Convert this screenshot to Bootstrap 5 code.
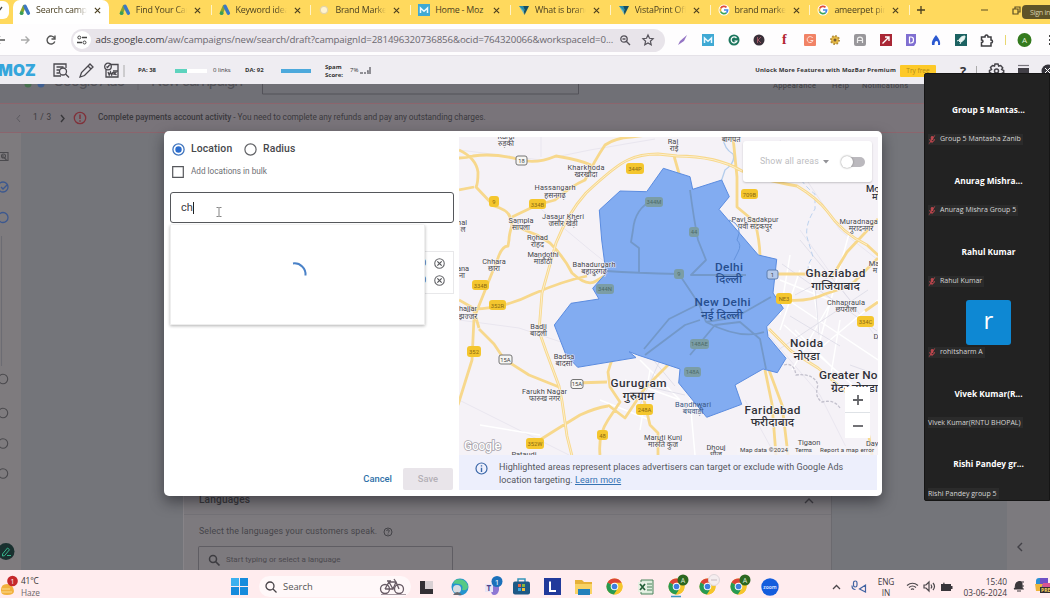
<!DOCTYPE html>
<html lang="en">
<head>
<meta charset="utf-8">
<meta name="viewport" content="width=device-width, initial-scale=1">
<title>Search campaign - Google Ads</title>
<link href="https://cdn.jsdelivr.net/npm/bootstrap@5.3.0/dist/css/bootstrap.min.css" rel="stylesheet">
<style>
html,body{height:598px;overflow:hidden}
body{font-family:"Open Sans","Noto Sans",sans-serif;font-size:9.5px;line-height:1.2;color:#333;white-space:nowrap}
svg{display:block;flex:none;overflow:visible}
.shell{width:1050px;height:598px}
/* browser chrome */
.tabstrip{height:24px;background:#ffd95d;padding-left:13px}
.tabitem{width:99.8px;height:20px;padding-left:6px;position:relative;flex:none}
.tabitem+.tabitem::before{content:"";position:absolute;left:-2px;top:5px;width:1px;height:10px;background:#fff3c8}
.tabitem.on::before,.tabitem.on+.tabitem::before{display:none!important}
.tabitem .ttl{width:51px;overflow:hidden;margin-left:5px;margin-right:-1px;font-size:8.900px;color:#4a4022;letter-spacing:-.2px;-webkit-mask-image:linear-gradient(90deg,#000 78%,transparent)}
.tabitem.on{width:96px;margin-right:3.8px;height:24px;background:#fff;border-radius:7px 7px 0 0;padding-bottom:4px}
.toolbar{height:32px;background:#fefdfe;border-bottom:1px solid #e5e2e8;padding-top:1px}
.omni{width:594px;height:23px;border-radius:12px;background:#e8e4ea;margin-left:8.500px;padding-left:2px}
.omni .knob{width:18px;height:18px;background:#fff}
.url{font-size:9.700px;letter-spacing:-.12px;margin-left:5px;width:518px;color:#6b686f}
.url b{font-weight:400;color:#3f3d42}
.exts{width:329px}
.exts>*{width:25.3px}
.exts svg{margin:auto}
.moz{height:28px;background:#efedf2;font-size:6px;font-weight:700;font-family:"Open Sans",sans-serif;padding-top:2px}
.mozlogo{font:900 15.500px/1 "Inter",sans-serif;color:#35a6dc;letter-spacing:.1px;width:39px;margin-left:-2px}
.meter{height:3.500px;width:32px;background:#fff}
.tryfree{background:#fdc928;color:#b08a1a;width:36px;height:12px;font-weight:400;font-size:6.5px;border-radius:1px}
/* dimmed page */
.page{height:486px;background:#74757a;font-family:Roboto,sans-serif;color:#46454a}
.ghead{height:19px;background:#707076;overflow:hidden}
.notice{height:30px;background:#79747a;border-top:1px solid #8b656d;border-bottom:1px solid #8b656d;font-size:8.3px;letter-spacing:-.05px;color:#3a393d}
.rail{width:21px;background:#7e7b7e;padding-top:17px}
.rail svg{position:relative;left:-5px}
.sheet{width:649px;background:#7d7a7e;margin-left:162px;border-left:1px solid #878488;border-right:1px solid #6b6a6f}
.langin{width:255px;height:24px;border:1px solid #5f5d63;border-bottom:0;border-radius:2px 2px 0 0;font-size:8px;color:#4b494e}
.endrail{width:43px;background:#7c7a7e}
/* dialog */
.dlg{position:absolute;left:164px;top:131px;width:718px;height:365px;background:#fff;border-radius:5px;box-shadow:0 6px 14px rgba(20,20,25,.5);font-family:Roboto,sans-serif;color:#3c4043}
.pane{width:295px;padding:12px 5px 6px 6px;position:relative}
.opt{font-size:10.400px;letter-spacing:.12px;color:#47484c;font-weight:500}
.locin{height:31px;border:1px solid #55575b;border-radius:3px;font-size:11px;margin-top:14px;padding-left:10px}
.suggest{position:absolute;left:6px;top:94px;width:255px;height:100px;background:#fff;border:1px solid #eee;border-top:0;box-shadow:0 1px 3px rgba(0,0,0,.3)}
.picked{height:43px;border:1px solid #e8e8ea;margin-top:28px;padding:5px 7px 6px 0}
.savebtn{width:50px;height:22px;background:#e9e5ea;color:#b4b0b6;border-radius:2px}
.dact{font-size:9.4px;font-weight:500;padding-right:1px}
.hint{height:35px;width:418px;background:#edeffc;font-size:9px;line-height:13px;color:#54565c;padding:6px 0 0 16px}
.mapbox{position:relative;width:419px;height:318px;background:#f5f2f7;overflow:hidden}
.areas{position:absolute;left:284px;top:4px;width:129px;height:41px;background:#fff;border-radius:3px;box-shadow:0 1px 2px rgba(0,0,0,.2);font-size:8.800px;color:#bdbdc1;letter-spacing:.15px;padding:0 7px 0 17px}
.areas span svg{vertical-align:middle}
.toggle{width:23px;height:10px;border-radius:6px;background:#bbb9be;position:relative}
.toggle::before{content:"";position:absolute;left:-1px;top:-1px;width:12px;height:12px;border-radius:50%;background:#fff;box-shadow:0 0 2px #777}
.zoomer{position:absolute;left:386px;top:250px;width:25px;height:51px;background:#fff}
.zoomer svg{margin:auto}
/* call participants */
.call{position:absolute;left:924px;top:73px;width:126px;height:428px;background:#222;border-radius:2px 0 0 2px;border:1px solid #151515;color:#fff;font-family:"Open Sans",sans-serif}
.tile{height:70.900px;position:relative}
.tile .big{font-weight:700;font-size:8.3px;text-align:center;padding:31px 0 0 3px}
.tile .tag{position:absolute;left:3px;bottom:0;height:11px;background:#2b2b2b;font-size:7px;color:#d6d6d6;padding-right:2px}
.ava{width:45px;height:45px;background:#0e88d3;border-radius:3px;font-size:24px;line-height:40px;text-align:center;position:absolute;left:41px;top:13px}
.signin{position:absolute;left:1022px;top:5px;width:40px;height:14px;border-radius:4px;background:#5f5328;color:#d5cdae;font-size:7.200px;line-height:14px;padding-left:8px;letter-spacing:-.3px}
/* taskbar */
.task{height:28px;background:#ffecee;padding-top:5px}
.find{width:152px;height:21px;border-radius:11px;background:#fff8f9;font-size:9.4px;color:#555}
.apps>*{width:31px;height:23px;display:flex;align-items:center;justify-content:center}
.clock{font-size:8.300px;line-height:11px;letter-spacing:-.1px;color:#3e3a3e}
</style>
</head>
<body>
<svg width="0" height="0" style="position:absolute">
<defs>
<symbol id="ads" viewBox="0 0 12 12"><path d="M5.200 2.500 2.600 8.500" stroke="#8aa52e" stroke-width="3.200" stroke-linecap="round"/><path d="M6 2.300 9.400 9.300" stroke="#3b78c4" stroke-width="3.400" stroke-linecap="round"/><circle cx="2.600" cy="9.200" r="1.900" fill="#3a9e55"/></symbol>
<symbol id="goog" viewBox="0 0 12 12"><circle cx="6" cy="6" r="5.500" fill="#fff"/><g fill="none" stroke-width="1.700"><path d="M8.500 3.300A3.700 3.700 0 0 0 2.700 4.400" stroke="#df4b3b"/><path d="M2.700 4.400a3.700 3.700 0 0 0 0 3.200" stroke="#efb22a"/><path d="M2.700 7.600a3.700 3.700 0 0 0 5.700 1.200" stroke="#37a457"/><path d="M8.400 8.800Q9.700 7.600 9.600 6H6" stroke="#4285e8"/></g></symbol>
<symbol id="vista" viewBox="0 0 12 12"><path d="M1 2h4l1.500 9z" fill="#65b8c7"/><path d="M5 2h6L6.500 11z" fill="#174f63"/><path d="M1 2h4l2 4-1 1z" fill="#2c8ea8"/></symbol>
<symbol id="mozm" viewBox="0 0 12 12"><path d="M0 0h12v12H0z" fill="#3fa9d4"/><path d="M2.500 9V4L6 7.200 9.500 4v5" fill="none" stroke="#e9f8ff" stroke-width="1.500"/></symbol>
<symbol id="x" viewBox="0 0 8 8"><path d="M1 1l6 6M7 1 1 7" stroke="#4a3f20" stroke-width="1.300"/></symbol>
<symbol id="chrome" viewBox="0 0 18 18"><circle cx="9" cy="9" r="8.500" fill="#f5c52c"/><path d="M9 9 1.600 4.800A8.500 8.500 0 0 1 16.500 5z" fill="#db4437"/><path d="M9 9 1.600 4.800A8.500 8.500 0 0 0 8.500 17.500l4-6z" fill="#279a53"/><path d="M9 5h7.500a8.500 8.500 0 0 1-8 12.500L12.500 11z" fill="#f5c52c"/><circle cx="9" cy="9" r="4" fill="#fff"/><circle cx="9" cy="9" r="3" fill="#3d7ee0"/></symbol>
<symbol id="mic" viewBox="0 0 8 10"><rect x="2.700" y="1" width="2.800" height="4.800" rx="1.400" fill="#b8474c"/><path d="M1.500 4.500q0 3 2.600 3t2.600-3M4 7.500V9M1 9.500 7 .5" fill="none" stroke="#c84850" stroke-width="1"/></symbol>
<symbol id="rx" viewBox="0 0 12 12"><circle cx="6" cy="6" r="4.400" fill="none" stroke="#67686c"/><path d="m4 4 4 4m0-4L4 8" stroke="#55565a" stroke-width="1.100"/></symbol>
</defs>
</svg>
<div class="shell d-flex flex-column position-relative">
  <header class="tabstrip d-flex align-items-start">
    <div class="position-absolute bg-white" style="left:-8px;top:1px;width:17px;height:18px;border-radius:6px"></div>
    <svg class="position-absolute" style="left:-4px;top:7px" width="7" height="6"><path d="m0 1 3 3 3-4" stroke="#444" fill="none" stroke-width="1.300"/></svg>
    <div class="tabitem on d-flex align-items-center"><svg width="12" height="12"><use href="#ads"/></svg><span class="ttl">Search campa</span><svg class="ms-2" width="7" height="7"><use href="#x"/></svg></div>
    <div class="tabitem d-flex align-items-center"><svg width="12" height="12"><use href="#ads"/></svg><span class="ttl">Find Your Cam</span><svg class="ms-2" width="7" height="7"><use href="#x"/></svg></div>
    <div class="tabitem d-flex align-items-center"><svg width="12" height="12"><use href="#ads"/></svg><span class="ttl">Keyword ideas</span><svg class="ms-2" width="7" height="7"><use href="#x"/></svg></div>
    <div class="tabitem d-flex align-items-center"><svg width="12" height="12"><circle cx="6" cy="6" r="3.700" fill="#fff3d0" stroke="#e3d4a8" stroke-width="1.300"/></svg><span class="ttl">Brand Market</span><svg class="ms-2" width="7" height="7"><use href="#x"/></svg></div>
    <div class="tabitem d-flex align-items-center"><svg width="12" height="12"><use href="#mozm"/></svg><span class="ttl" style="-webkit-mask-image:none">Home - Moz</span><svg class="ms-2" width="7" height="7"><use href="#x"/></svg></div>
    <div class="tabitem d-flex align-items-center"><svg width="12" height="12"><use href="#vista"/></svg><span class="ttl">What is brand</span><svg class="ms-2" width="7" height="7"><use href="#x"/></svg></div>
    <div class="tabitem d-flex align-items-center"><svg width="12" height="12"><use href="#vista"/></svg><span class="ttl">VistaPrint Offi</span><svg class="ms-2" width="7" height="7"><use href="#x"/></svg></div>
    <div class="tabitem d-flex align-items-center"><svg width="12" height="12"><use href="#goog"/></svg><span class="ttl">brand market</span><svg class="ms-2" width="7" height="7"><use href="#x"/></svg></div>
    <div class="tabitem d-flex align-items-center"><svg width="12" height="12"><use href="#goog"/></svg><span class="ttl">ameerpet pin</span><svg class="ms-2" width="7" height="7"><use href="#x"/></svg></div>
    <div class="tabitem d-flex align-items-center"><svg width="8" height="8"><path d="M4 0v8M0 4h8" stroke="#4a3f20" stroke-width="1.300"/></svg><svg style="margin-left:56px" width="8" height="8"><path d="M0 4h7" stroke="#5c4f25"/></svg><svg style="margin-left:23px" width="9" height="9"><path d="M1 3h5v5H1zM3 3V1h5v5H6" fill="none" stroke="#5c4f25" stroke-width="1.200"/></svg></div>
  </header>
  <div class="signin">Sign in</div>

  <div class="toolbar d-flex align-items-center">
    <svg width="62" height="22"><g fill="none" stroke="#555" stroke-width="1.400"><path d="M-3 11h8M0 7l-4 4 4 4"/><path stroke="#aaa" d="M21 11h8M25.500 7.500 29 11l-3.500 3.500"/><path d="M54.500 9a4 4 0 1 0 .3 3.500M55 6.500V10h-3.500"/></g></svg>
    <div class="omni d-flex align-items-center">
      <span class="knob rounded-circle d-flex align-items-center justify-content-center"><svg width="10" height="10"><path d="M5 2.500h5M0 7.500h5" stroke="#444" stroke-width="1.300"/><circle cx="2.300" cy="2.500" r="1.500" fill="none" stroke="#444"/><circle cx="7.500" cy="7.500" r="1.500" fill="none" stroke="#444"/></svg></span>
      <span class="url"><b>ads.google.com</b>/aw/campaigns/new/search/draft?campaignId=281496320736856&amp;ocid=764320066&amp;workspaceId=0...</span>
      <svg style="margin-left:6px" width="11" height="11"><circle cx="4" cy="4" r="3.200" fill="none" stroke="#55525a" stroke-width="1.300"/><path d="M2.500 4h3M6.500 6.500 10 10" stroke="#55525a" stroke-width="1.400"/></svg>
      <svg style="margin-left:11px" width="12" height="12"><path d="m6 1 1.500 3.300 3.600.4L8.400 7.200l.8 3.500L6 8.900l-3.200 1.800.8-3.500L.9 4.700l3.600-.4z" fill="none" stroke="#55525a" stroke-width="1.200"/></svg>
    </div>
    <div class="exts d-flex align-items-center" style="margin-left:6px">
      <span><svg width="12" height="12"><path d="M1 11 3 7l7-6-3 6z" fill="#9474c4"/></svg></span>
      <span><svg width="12" height="12"><use href="#mozm"/></svg></span>
      <span><svg width="12" height="12"><circle cx="6" cy="6" r="5.500" fill="#1d765e"/><path d="M8.500 4A3 3 0 1 0 9 7H6.500" fill="none" stroke="#fff" stroke-width="1.200"/></svg></span>
      <span><svg width="12" height="12"><circle cx="6" cy="6" r="5.500" fill="#3a3039"/><path d="M4.500 3v6M8 3 5 6l3 3" fill="none" stroke="#9a5563"/></svg></span>
      <span class="text-center" style="font:700 14px/12px 'Liberation Serif',serif;color:#b32632">f</span>
      <span><svg width="12" height="12"><rect width="12" height="12" rx="1" fill="#f18366"/><path d="M8.700 4A3 3 0 1 0 9 6.500H6.500" fill="none" stroke="#ffe1d8"/></svg></span>
      <span><svg width="12" height="12"><circle cx="6" cy="6" r="4" fill="#e8bb45" stroke="#b08c3c" stroke-width="2" stroke-dasharray="1.500 1.600"/><circle cx="6" cy="6" r="1.500" fill="#755a35"/></svg></span>
      <span><svg width="12" height="12"><rect width="12" height="12" rx="2" fill="#99979b"/><path d="M3.500 9V5.500q0-2.300 2.500-2.300t2.500 2.300V9M3.500 6.500h5" fill="none" stroke="#eee" stroke-width="1.200"/></svg></span>
      <span><svg width="12" height="12"><path d="M0 0h12v12H0z" fill="#a92735"/><path d="m2.500 9.500 6-6M5 3h4v4" stroke="#fff" stroke-width="1.400" fill="none"/></svg></span>
      <span><svg width="12" height="12"><path d="M1 0h10v9l-2 3H1z" fill="#806fd1"/><path d="M4.500 3v6H6q2.500 0 2.500-3T6 3z" fill="none" stroke="#fff" stroke-width="1.200"/></svg></span>
      <span><svg width="12" height="12"><path d="M2 11Q1 7 6 1q5 6 4 10z" fill="#2b59d0"/><path d="M4.500 11q0-4 2-4t1.500 4z" fill="#fff"/></svg></span>
      <span><svg width="12" height="12"><path d="M0 0h12v12H0z" fill="#1c6262"/><path d="M10 2Q5 2 4 7l1 1q5-1 5-6M4 6 2 7m4 1-1 2" fill="#e8f5f2" stroke="#e8f5f2"/></svg></span>
      <span><svg width="13" height="13"><path d="M1.500 3H5q0-2 1.500-2T8 3h3v3q1.500 0 1.500 1.500T11 9v3H1.500V8.500Q3 8.500 3 7.300T1.500 6z" fill="none" stroke="#3d3c40" stroke-width="1.500"/></svg></span>
    </div>
    <svg width="46" height="20" style="margin-left:4px"><path d="M1.500 5v10" stroke="#e8d770"/><circle cx="20.500" cy="10" r="7" fill="#347a1e"/><text x="20.500" y="13" font-size="8" text-anchor="middle" fill="#e2f1dc">A</text><path d="M46 5v2m0 2v2m0 2v2" stroke="#444" stroke-width="2"/></svg>
  </div>

  <div class="moz d-flex align-items-center">
    <span class="mozlogo">MOZ</span>
    <svg style="margin-left:16px" width="75" height="18"><g fill="none" stroke="#4a484e" stroke-width="1.300"><path d="M13 6V2H1v12h7M3.500 5h7M3.500 8h3M3.500 11h3"/><circle cx="10" cy="9.500" r="3.500"/><path d="m12.500 12 3.500 3.500M27 15l1.500-4.500 8.500-8.500 3 3-8.500 8.500zM35 4l3 3"/><path d="M60 9h5M56.500 2.500H65v12.500H53V8"/><circle cx="55" cy="4.500" r="3.300"/><path d="m53.500 4.500 1 1 2-2.500M55 10l1.200 3 1.300-3 1.200 3 1.300-3M61 10v3M63.500 10l-2 1.500 2 1.500"/></g><path d="M71 3v12" stroke="#aaa"/></svg>
    <span style="margin-left:10px;width:37px">PA: 38</span>
    <span class="meter"><i class="d-block h-100" style="width:37%;background:#5dd3be"></i></span>
    <span class="fw-normal" style="margin-left:6px;width:32px">0 links</span>
    <span style="width:36px">DA: 92</span>
    <span class="meter" style="width:30px;background:#4da9dc"></span>
    <span style="margin-left:14px;width:25px;line-height:8px">Spam<br>Score:</span>
    <span class="fw-normal">7%</span>
    <svg width="14" height="8" style="margin-left:2px"><path d="M0 6h3M4 6h2M7 4h1v3M10 0v7" stroke="#727077" stroke-width="1.500" fill="none"/></svg>
    <span class="ms-auto text-end" style="width:145px;margin-right:4px;letter-spacing:.16px">Unlock More Features with MozBar Premium</span>
    <span class="tryfree d-flex align-items-center justify-content-center">Try free</span>
    <svg width="114" height="20" ><text x="24" y="14.500" font-size="13" font-weight="700" fill="#353439">?</text><path d="M40.500 5v12" stroke="#aaa"/><g fill="none" stroke="#46444a" stroke-width="1.500"><path d="m58.500 5 .5-2h3l.7 2 2-.5 2 2.300-1 1.700 2 1v2l-2 1 1 2-2 2-2-1-.7 2h-3l-.5-2-2 1-2-2 1-2-2-1v-2l2-1-1-2 2-2z"/><circle cx="60.500" cy="10" r="2"/></g><path d="M82 4.500h11" stroke="#77757c" stroke-width="1.200"/><path d="M82 7h11v6H82z" fill="#424047"/><circle cx="112" cy="10" r="6.500" fill="#35343b"/><path d="m109 7 5 5m0-5-5 5" stroke="#fff"/></svg>
  </div>

  <main class="page d-flex flex-column">
    <div class="ghead position-relative">
      <svg width="924" height="19"><circle cx="28" cy="0" r="3.500" fill="#47704f"/><circle cx="41" cy="0" r="3.500" fill="#3f5f91"/><g font-size="16" fill="#515057"><text x="53" y="1.500" textLength="72">Google Ads</text><text x="151" y="1.500" textLength="92">New campaign</text></g><path d="M138 0v6" stroke="#66656b"/><path d="M262.500 0v10h316V0" fill="none" stroke="#535259"/><g font-size="7.500" fill="#3f3e44"><text x="773" y="4" textLength="43">Appearance</text><text x="832" y="4" textLength="17">Help</text><text x="862" y="4" textLength="46">Notifications</text></g></svg>
    </div>
    <div class="notice d-flex align-items-center">
      <svg style="margin-left:15px" width="8" height="9"><path d="M5 1 2 4.500 5 8" fill="none" stroke="#5c5a60"/></svg><span style="margin-left:10px;width:26px;letter-spacing:.3px">1 / 3</span>
      <svg width="8" height="9"><path d="m2 1 3 3.500L2 8" fill="none" stroke="#38373b" stroke-width="1.400"/></svg>
      <svg style="margin-left:6px" width="14" height="14"><circle cx="7" cy="7" r="5.700" fill="none" stroke="#80313a" stroke-width="1.300"/><path d="M7 3.500V8m0 1.300v1.500" stroke="#80313a" stroke-width="1.500"/></svg>
      <span style="margin-left:11px"><span class="fw-medium">Complete payments account activity</span> - You need to complete any refunds and pay any outstanding charges.</span>
    </div>
    <div class="d-flex flex-grow-1" style="min-height:0">
      <aside class="rail">
        <svg width="20" height="420" viewBox="-5 150 20 420"><g fill="none" stroke="#4b4a4e" stroke-width="1.100"><path d="M-4 152.500H8v8H-4zM3 155v3m1.500 0 2 2"/><circle cx="3.500" cy="156" r="2"/><g stroke="#3c588f" stroke-width="1.300"><circle cx="3" cy="187" r="5"/><path d="m1 187 2 2 4-4"/><circle cx="3" cy="217.500" r="5"/></g><path d="M1.500 236v130" stroke="#6c6c73"/><circle cx="3" cy="379" r="4.700"/><circle cx="3" cy="413" r="4.700"/><circle cx="3" cy="443.500" r="4.700"/><circle cx="3" cy="473.500" r="4.700"/></g><circle cx="6" cy="551.500" r="8.500" fill="#19302f"/><path d="m2.500 554 5-6 2 1.700-5 6-2 .3zM7 555.500h4" fill="none" stroke="#35b48c"/></svg>
      </aside>
      <section class="sheet d-flex flex-column justify-content-end">
        <div class="d-flex align-items-center justify-content-between" style="padding:0 17px 0 15px;height:28px;border-bottom:1px solid #747277"><span class="fw-medium" style="font-size:10.200px;color:#38373b;letter-spacing:.12px">Languages</span><svg width="10" height="7"><path d="m1 6 4-4 4 4" stroke="#3e3d42" fill="none" stroke-width="1.400"/></svg></div>
        <div class="d-flex align-items-center" style="height:31px;padding:2px 0 0 15px;font-size:8.800px;letter-spacing:.14px">Select the languages your customers speak. <svg width="10" height="10" style="margin-left:6px"><circle cx="5" cy="5" r="4" fill="none" stroke="#444348"/><path d="M3.700 4q0-1.300 1.300-1.300T6.300 4Q6.300 4.700 5 5.500M5 6.700v1" fill="none" stroke="#444348"/></svg></div>
        <div class="langin d-flex align-items-center" style="margin-left:14px;padding-top:2px"><svg width="12" height="12" style="margin:0 6px 0 9px"><circle cx="5" cy="5" r="3.500" fill="none" stroke="#3d3c41" stroke-width="1.500"/><path d="m7.500 7.500 4 4" stroke="#3d3c41" stroke-width="1.700"/></svg><span>Start typing or select a language</span></div>
      </section>
      <div class="endrail ms-auto d-flex align-items-end" style="padding:0 0 17px 9px"><svg width="8" height="12"><path d="M6 2 2 6l4 4" stroke="#424147" stroke-width="1.400" fill="none"/></svg></div>
    </div>
  </main>

  <div class="dlg d-flex">
    <div class="pane d-flex flex-column">
      <div class="d-flex align-items-center opt" style="padding-left:2px;height:13px"><svg width="13" height="13"><circle cx="6.500" cy="6.500" r="5.600" fill="none" stroke="#3f74bd" stroke-width="1.300"/><circle cx="6.500" cy="6.500" r="3.200" fill="#2b6dce"/></svg><span style="margin-left:6px;width:53px">Location</span><svg width="13" height="13"><circle cx="6.500" cy="6.500" r="5.600" fill="none" stroke="#606165" stroke-width="1.200"/></svg><span style="margin-left:6px">Radius</span></div>
      <div class="d-flex align-items-center" style="padding-left:2px;height:12px;margin-top:10px;font-size:8.200px;letter-spacing:0;color:#6d6e73"><svg width="12" height="12"><path d="M.7.7h10.600v10.600H.7z" fill="none" stroke="#56575b" stroke-width="1.200"/></svg><span style="margin-left:7px">Add locations in bulk</span></div>
      <div class="locin d-flex align-items-center">ch<i style="width:1px;height:12px;background:#222"></i><svg style="margin:8px 0 0 22px" width="6" height="10"><path d="M.5.500h2L3 1l.5-.5h2M3 1v8M.5 9.500h2L3 9l.5.500h2" fill="none" stroke="#777" stroke-width=".9"/></svg></div>
      <div class="picked d-flex flex-column justify-content-between align-items-end"><span class="d-flex align-items-center" style="gap:7px;font-size:9px">0<svg width="13" height="13" viewBox="0 0 12 12"><use href="#rx"/></svg></span><span class="d-flex align-items-center" style="gap:7px;font-size:9px">0<svg width="13" height="13" viewBox="0 0 12 12"><use href="#rx"/></svg></span></div>
      <div class="suggest"><svg class="position-absolute" style="left:120px;top:37px" width="18" height="18"><path d="M2 1.500A11 11 0 0 1 14.500 13.500" fill="none" stroke="#4a82c8" stroke-width="2"/></svg></div>
      <div class="d-flex justify-content-end align-items-center mt-auto dact"><span style="color:#2f6fa8;margin-right:11px">Cancel</span><span class="savebtn d-flex align-items-center justify-content-center">Save</span></div>
    </div>
    <div style="padding-top:6px">
      <div class="mapbox">
        <svg width="419" height="318" viewBox="459 137 419 318" font-family="Roboto,'Noto Sans Devanagari','Noto Sans',sans-serif">
          <g fill="none" stroke="#e9e6ef" stroke-width="1"><path d="M459 150 541 160 590 150 655 139M541 137v20M459 320l60 8 60 20M459 400l70 35 40 20M530 200l60 50 50 40M850 455l-30-60-60-70M780 140l60 90 38 30M745 400l30 55M800 230l78 110"/></g>
          <g fill="none" stroke="#fff" stroke-width="1.500"><path d="M788 300l90 60M784 325l80 70M800 270l-20 60M810 265l10 70M832 300l-40 70M850 230l-30 110M878 300l-60 50M795 330l40 40M640 360l40 40M625 380l55 20M650 370l-10 60M690 400l5 55M600 400l50 20M480 425l60 10M780 280l50 20M790 255l-10 60M840 320l-10 60"/></g>
          <g fill="none" stroke="#dcdae6" stroke-width=".8"><path d="M782 264l95 67M778 350l90-60M640 385l45 10M645 350l30 36M660 360l-20 45M790 316l50 30M800 240l50 60M815 285l4 50M795 295l38-20M850 365l28 10"/></g>
          <g fill="none" stroke="#b4cdec" stroke-width="1.300"><path d="M723 137q1 12 10 17 3 8-8 16l-4 12"/><path d="M801 180q8 10 14 14v15q-10 15-8 28l6 20q-8 10-3 16" stroke-dasharray="5 3" stroke-width=".9"/><path d="M784 365q10-3 12 10 18-2 22 10-4 12 4 17 12-3 18 6" stroke="#c3c1cd" stroke-dasharray="3 1.500"/></g>
          <g stroke="#f7d88c" fill="none" stroke-width="2.800" stroke-linejoin="round"><path d="M459 150q17 8 19 22 0 12-2 15l18 19q14 4 16 11l2 8v0q-3 10-3 15l-1 6q-6 0-10 12l-16 40-8 20-2 42-14 45M459 190l15-3M459 158q8 0 14-2 20-3 44 3 18 6 39-3 24 4 35 9M512 217l25-12 18-5q16-14 30-20 10-20 20-35 10-7 26-8l25-3M512 225l25 10 13 8q14 14 22 30 15 14 24 8l10-6M556 243q12-30 30-50 30-28 42-33 12-6 30-6l19 2q40 0 65 15 20 9 55 15 20 12 30 25 15 22 40 34 30 28 51 40M674 156l10 35M556 243l-14 50-3 38 7 20 13 35 3 15 5 35 6 24M473 309q30 0 60-15 30-13 54-18M479 329l15 15 10 15 25 16 30 12M575 383l32-1M459 300l14 8 6 20M535 443q22-14 45-28 15-7 28-9M600 455q-2-20 8-35l12-18-10-15-2-15q8-30 28-38M608 405l17 13 20-30 30-30M644 400l6 25 8 8v22M733 137l4 40v30l18 15q5 20 5 35l2 20M777 274h25q20 0 30 3l15-25 31-33M785 300q24 2 40-6l25-8 28-28M769 329l22 22 27 17 35 30 12 15 7 42M865 311l13-9M765 370l7 34 4 51M769 370l13 35 6 50"/></g>
          <g fill="none" stroke="#fdf1d2" stroke-width=".9"><path d="M556 243q12-30 30-50 30-28 42-33 12-6 30-6l19 2q40 0 65 15M556 243l-14 50-3 38 7 20 13 35 3 15 5 35 6 24M797 186q20 12 30 25 15 22 40 34M769 329l22 22 27 17 35 30"/></g>
          <path d="M599.300 210 620 191 646.700 191.700 663.300 168.300 690 176.700 692.700 189.300 721.700 180 729.300 196.700 719 209.300 758.300 255 776.700 259.300 773 293 783.300 308.300 766.700 326.700 768 336.700 786 358.300 777.300 372.700 763 369 735 385 741.700 404.300 706.700 417.300 678.700 383 680 369 637.700 355 629 351.700 636 357.600 577.700 367.300 566 355 554.300 325 571 303.300 599 299 592.700 288.300 606 273.300 601.700 240z" fill="#82acf1" stroke="#5b8ce0" stroke-width="1"/>
          <g fill="none" stroke="#7398c9" stroke-width="1.800" stroke-linejoin="round"><path d="M690 190q4 30 8 50l8 20-15 15h55M606 271q30 2 73 3l20 30 7 18M653 200q-18 8-20 30l-2 12 8 6v25M699 304l-30 15-25 30M706 322l30-5 35-20M690 355l25-30 25-3 20 17 6 30M700 320l-15 5-40 30M706 322q35 18 58 10"/></g>
          <path d="M729 220q15 5 8 20 5 5 1 12l-4 8" fill="none" stroke="#6493dc"/>
          <g font-size="5.800" fill="#8b6a12" text-anchor="middle">
            <g fill="#f4c62e"><rect x="626" y="163" width="18" height="11" rx="3"/><rect x="489" y="196" width="10" height="11" rx="3"/><rect x="529" y="199" width="17" height="10" rx="3"/><rect x="472" y="280" width="17" height="10" rx="3"/><rect x="489" y="300" width="17" height="10" rx="3"/><rect x="467" y="346" width="14" height="11" rx="3"/><rect x="597" y="430" width="11" height="10" rx="3"/><rect x="526" y="438" width="18" height="11" rx="3"/><rect x="636" y="404" width="17" height="11" rx="3"/><rect x="741" y="189" width="17" height="10" rx="3"/><rect x="776" y="293" width="16" height="11" rx="3"/><rect x="857" y="316" width="17" height="11" rx="3"/></g>
            <text x="635" y="171">344P</text><text x="494" y="204">9</text><text x="537.500" y="206.500">334B</text><text x="480.500" y="287.500">334B</text><text x="497.500" y="307.500">352R</text><text x="474" y="354">352</text><text x="602.500" y="437.500">48</text><text x="535" y="446">352W</text><text x="644.500" y="412">248A</text><text x="749.500" y="196.500">709B</text><text x="784" y="301">NE3</text><text x="865.500" y="324">334C</text>
            <g fill="#7b9da6"><rect x="645" y="197" width="18" height="10" rx="3"/><rect x="689" y="227" width="10" height="10" rx="3"/><rect x="674" y="269" width="10" height="10" rx="3"/><rect x="596" y="284" width="18" height="10" rx="3"/><rect x="690" y="339" width="19" height="10" rx="3"/><rect x="684" y="367" width="17" height="10" rx="3"/></g>
            <g fill="#4d6b68"><text x="654" y="204">344M</text><text x="694" y="234">44</text><text x="679" y="276">9</text><text x="605" y="291">344N</text><text x="699.500" y="346">148AE</text><text x="692.500" y="374">148A</text></g>
            <g fill="#f6f6f3" stroke="#666" stroke-width=".9"><rect x="516" y="156" width="11" height="9" rx="2"/><rect x="499" y="355" width="13" height="9" rx="2"/><rect x="571" y="379.500" width="12" height="9" rx="2"/><rect x="767" y="270" width="11" height="9" rx="2" fill="#b5c9ea" stroke="#5878a8"/></g><g fill="#444"><text x="521.500" y="162.800">18</text><text x="505.500" y="362">15A</text><text x="577" y="386.300">15A</text><text x="772.500" y="277">1</text></g>
          </g>
          <g text-anchor="middle" fill="#46464c" font-size="7.400" paint-order="stroke" stroke="#f8f6fa" stroke-opacity=".8" stroke-width="1.200">
            <text x="506" y="139">Kurgi</text><text x="506" y="146">रुड़की</text><text x="673" y="144">Rai</text><text x="674" y="151">राई</text><text x="731" y="142">बागपत</text>
            <text x="586" y="170" textLength="37">Kharkhoda</text><text x="586" y="177">खरखौदा</text>
            <text x="555" y="190" textLength="41">Hassangarh</text><text x="555" y="197.500">हसनगढ़</text>
            <text x="563" y="218.500" textLength="42">Jasaur Kheri</text><text x="563" y="225.500">जसौर खेड़ी</text>
            <text x="521" y="223">Sampla</text><text x="521" y="230">सांपला</text><text x="537.500" y="239.500">Rohad</text><text x="537.500" y="246.500">रोहद</text>
            <text x="543" y="257">Mandothi</text><text x="543" y="264">मांडौठी</text><text x="494" y="263.500">Chhara</text><text x="494" y="270.500">छारा</text>
            <text x="594" y="266.500" textLength="43">Bahadurgarh</text><text x="594" y="273.500">बहादुरगढ़</text>
            <text x="467" y="225" text-anchor="end">Kanhal</text><text x="463" y="232">ल</text><text x="463" y="271">ana</text><text x="462" y="278">ना</text><text x="468" y="311">hajjar</text><text x="468" y="318.500">झज्जर</text>
            <text x="538.500" y="329">Badli</text><text x="538.500" y="336">बादली</text><text x="564" y="359">Badsa</text><text x="564" y="366">बादसा</text>
            <text x="544.500" y="393.500" textLength="45">Farukh Nagar</text><text x="544.500" y="400.500">फारुख नगर</text>
            <text x="755" y="222" textLength="47">Pavi Sadakpur</text><text x="755" y="229">पवी सदकपुर</text><text x="860" y="224" textLength="41">Muradnagar</text><text x="861" y="231">मुरादनगर</text><text x="846" y="305" textLength="38">Chhapraula</text><text x="846" y="312">छपरौला</text>
            <text x="874" y="266">Ma</text><text x="875" y="273">म</text><text x="876" y="339">D</text>
            <text x="663" y="440" textLength="38">Maruti Kunj</text><text x="663" y="447">मारुति कुंज</text><text x="716" y="450">Dhouj</text><text x="716" y="457">धौज</text><text x="809" y="444.500">Tigaon</text><text x="875" y="446">Dayal</text><text x="524" y="457">Pataudi</text>
          </g>
          <g text-anchor="middle" fill="#3a5782" font-size="7.400"><text x="693" y="407" textLength="36">Bandhwari</text><text x="693" y="414">बंधवाड़ी</text></g>
          <g text-anchor="middle" fill="#303138" font-weight="500" font-size="11.800" paint-order="stroke" stroke="#f8f6fa" stroke-width="1.500">
            <text x="835.500" y="277" textLength="60">Ghaziabad</text><text x="835.500" y="290">गाजियाबाद</text><text x="806.500" y="347" textLength="33">Noida</text><text x="806.500" y="360">नोएडा</text><text x="819" y="379" text-anchor="start" textLength="75">Greater Noida</text><text x="831" y="391.500" text-anchor="start">ग्रेटर नोएडा</text><text x="638.500" y="387" textLength="56">Gurugram</text><text x="638.500" y="399.500">गुरुग्राम</text><text x="772.500" y="413.500" textLength="56">Faridabad</text><text x="772.500" y="426">फरीदाबाद</text><text x="866" y="191.500" font-size="9.500" text-anchor="start">Modinagar</text><text x="872" y="199.500" font-size="9" text-anchor="start">मोदी</text>
          </g>
          <g text-anchor="middle" fill="#264e8e" font-weight="500" font-size="11.800"><text x="729" y="270.500" textLength="28">Delhi</text><text x="729" y="283">दिल्ली</text><text x="722.500" y="306" textLength="56">New Delhi</text><text x="722" y="319">नई दिल्ली</text></g>
          <text x="464" y="449.500" font-size="12" fill="#fff" stroke="#a5a3aa" stroke-width="1.500" paint-order="stroke" font-weight="500" textLength="37">Google</text>
          <path d="M737 446h141v9H737z" fill="#f5f3f7" opacity=".8"/><g font-size="6.200" fill="#3d3d42"><text x="740" y="452" textLength="48">Map data ©2024</text><text x="795" y="452" textLength="17">Terms</text><text x="820" y="452" textLength="54">Report a map error</text></g>
        </svg>
        <div class="areas d-flex align-items-center justify-content-between"><span>Show all areas <svg class="d-inline-block" style="margin-left:2px" width="6" height="4"><path d="M0 0h6L3 3.500z" fill="#929297"/></svg></span><span class="toggle"></span></div>
        <div class="zoomer d-flex flex-column"><span class="d-flex flex-fill border-bottom"><svg width="12" height="12"><path d="M6 1v10M1 6h10" stroke="#626367" stroke-width="1.800"/></svg></span><span class="d-flex flex-fill"><svg width="12" height="12"><path d="M1 6h10" stroke="#626367" stroke-width="1.800"/></svg></span></div>
      </div>
      <div class="hint d-flex"><svg width="14" height="14" style="margin:1px 10px 0 0"><circle cx="6.500" cy="6.500" r="5.500" fill="none" stroke="#3a67a8" stroke-width="1.200"/><path d="M6.500 5.800V10m0-6.800v1.400" stroke="#3a67a8" stroke-width="1.400"/></svg><span style="letter-spacing:.06px">Highlighted areas represent places advertisers can target or exclude with Google Ads<br>location targeting. <u style="color:#3774b4">Learn more</u></span></div>
    </div>
  </div>

  <div class="call">
    <div class="tile"><div class="big">Group 5 Mantas...</div><div class="tag d-flex align-items-center"><svg width="8" height="9" class="me-1"><use href="#mic"/></svg>Group 5 Mantasha Zanib</div></div>
    <div class="tile"><div class="big">Anurag Mishra...</div><div class="tag d-flex align-items-center"><svg width="8" height="9" class="me-1"><use href="#mic"/></svg>Anurag Mishra Group 5</div></div>
    <div class="tile"><div class="big">Rahul Kumar</div><div class="tag d-flex align-items-center"><svg width="8" height="9" class="me-1"><use href="#mic"/></svg>Rahul Kumar</div></div>
    <div class="tile"><div class="ava">r</div><div class="tag d-flex align-items-center"><svg width="8" height="9" class="me-1"><use href="#mic"/></svg>rohitsharm A</div></div>
    <div class="tile"><div class="big">Vivek Kumar(R...</div><div class="tag d-flex align-items-center">Vivek Kumar(RNTU BHOPAL)</div></div>
    <div class="tile"><div class="big">Rishi Pandey gr...</div><div class="tag d-flex align-items-center">Rishi Pandey group 5</div></div>
  </div>

  <footer class="task d-flex align-items-center">
    <svg width="18" height="24"><path d="M1 15q0-6 6-6t7 7q0 4-7 4t-6-5" fill="#f2b13e"/><path d="M2 14h8M1 17h11" stroke="#fbdc91"/><circle cx="12.500" cy="6" r="5.300" fill="#c5282c"/><text x="12.500" y="8.800" font-size="7" text-anchor="middle" fill="#fff">1</text></svg>
    <div style="margin-left:3px;width:210px;font-size:8.300px;line-height:11.500px;letter-spacing:-.15px">41°C<br><span style="color:#6b666a">Haze</span></div>
    <svg width="17" height="17"><path d="M0 0h8v8H0zM9 0h8v8H9zM0 9h8v8H0zM9 9h8v8H9z" fill="#168bdc"/><path d="M0 0h8v8H0z" fill="#3bb0ef"/></svg>
    <div class="find d-flex align-items-center" style="margin-left:11px"><svg width="12" height="12" style="margin:0 6px 0 6px"><circle cx="5" cy="5" r="4" fill="none" stroke="#474347" stroke-width="1.300"/><path d="m8 8 3.500 3.500" stroke="#474347" stroke-width="1.300"/></svg>Search
      <svg class="ms-auto me-1" width="28" height="17"><g fill="none" stroke="#685b65" stroke-width="1.300"><circle cx="6" cy="11" r="4.500"/><circle cx="20" cy="11" r="4.500"/><path d="m6 11 4-7h7l3 7M10 4l4 7 3-7M6 11h8M15 1l2 3M8 3h4"/></g><path d="M2 16.500h25" stroke="#a99ba3"/></svg></div>
    <div class="apps d-flex">
      <span><svg width="14" height="14"><path d="M1 1h12v12H1z" fill="#d8d0d3"/><path d="M0 1h5v8h8v5H0z" fill="#333035"/></svg></span>
      <span style="width:35px"><svg width="18" height="18"><circle cx="9" cy="9" r="8.500" fill="#2494cf"/><path d="M4 2q10-3 13 6 0 5-6 4 2-5-3-6T2 6z" fill="#56c985"/><circle cx="6" cy="11" r="4" fill="#d8dce2"/><path d="M2 17q4-6 9 0z" fill="#66686f"/></svg></span>
      <span><svg width="20" height="20"><path d="M8 7h8v6q-1 5-5 5-3 0-3-5z" fill="#8d77d4"/><path d="M2 7h8v8H2z" fill="#e8e5f5"/><text x="3.500" y="14" font-size="8" font-weight="700" fill="#4e438d">T</text><circle cx="14" cy="4.500" r="5.500" fill="#1b70ba"/><text x="14" y="7.500" font-size="8" text-anchor="middle" fill="#fff">1</text></svg></span>
      <span style="width:26px"><svg width="17" height="17"><path d="M5 4V1h7v3" fill="none" stroke="#3494b9" stroke-width="1.500"/><rect y="3.500" width="17" height="13" rx="2" fill="#1e5986"/><path d="M5 6h3v3H5z" fill="#e96842"/><path d="M9 6h3v3H9z" fill="#86b63f"/><path d="M5 10h3v3H5z" fill="#3da8df"/><path d="M9 10h3v3H9z" fill="#f3be37"/></svg></span>
      <span style="width:37px"><svg width="17" height="17"><path d="M0 0h17v17H0z" fill="#213a9b"/><path d="M6 3.500v9.500h6" fill="none" stroke="#fff" stroke-width="2"/></svg></span>
      <span style="width:25px"><svg width="18" height="16"><path d="M0 1h7l2 2h8v12H0z" fill="#e6b138"/><path d="M0 5h17v10H0z" fill="#f8d264"/><path d="M3 10h12v6H3z" fill="#2380bb"/></svg></span>
      <span style="width:37px"><svg width="17" height="17"><use href="#chrome"/></svg></span>
      <span style="width:25px"><svg width="15" height="16"><path d="M3 1h12v14H3z" fill="#dcecdc" stroke="#4a845c"/><path d="M8 5h6M8 8h6M8 11h6" stroke="#4a845c"/><path d="M0 3h9v10H0z" fill="#e8f1e5"/><path d="m2 5 5 6m0-6-5 6" stroke="#235f38" stroke-width="1.700"/></svg></span>
      <span style="width:37px"><svg width="20" height="21"><use href="#chrome" x="1" y="2" width="17" height="17"/><circle cx="16" cy="4" r="5.500" fill="#2d6720"/><text x="16" y="6.500" font-size="7" text-anchor="middle" fill="#dce8d5">A</text><path d="M4 20.500h10" stroke="#3d98c6" stroke-width="1.500"/></svg></span>
      <span style="width:25px"><svg width="20" height="21"><use href="#chrome" x="1" y="2" width="17" height="17"/><circle cx="16" cy="4" r="5.500" fill="#f5edef" stroke="#ded5d9"/><path d="M13 4h6" stroke="#c6b9bf"/></svg></span>
      <span style="width:37px"><svg width="20" height="21"><use href="#chrome" x="1" y="2" width="17" height="17"/><circle cx="16" cy="4" r="5.500" fill="#2d6720"/><text x="16" y="6.500" font-size="7" text-anchor="middle" fill="#dce8d5">A</text></svg></span>
      <span style="width:25px"><svg width="18" height="18"><circle cx="9" cy="9" r="8.700" fill="#145ddd"/><text x="9" y="10.800" font-size="5" text-anchor="middle" fill="#c9dcff" font-weight="700">zoom</text></svg></span>
    </div>
    <svg class="ms-auto" width="40" height="14"><path d="m2 9 3.500-3.500L9 9" fill="none" stroke="#4b474b" stroke-width="1.300"/><g fill="none" stroke="#4163a2" stroke-width="1.200"><rect x="22.500" y="1" width="3.500" height="6" rx="1.700"/><path d="M21 5.500q0 4 3.500 4M34.500 5v7l-6-3z"/></g></svg>
    <div class="clock text-center" style="margin-left:5px;width:20px">ENG<br>IN</div>
    <svg style="margin-left:11px" width="46" height="12"><g fill="none" stroke="#4b474b" stroke-width="1.200"><path d="M0 4.500q5.500-4.500 11 0M2 6.500q3.500-3 7 0M4 8.500q1.500-1.300 3 0M17 4h2l3-3v9l-3-3h-2zM24 3.500q1.500 2 0 4M26 2q3 3.500 0 7"/></g><path d="M34 3h10v7H34zM44 5h1.500v3H44" fill="#38353a"/><path d="m35 5 2-4 1 3" fill="#38353a"/></svg>
    <div class="clock text-end" style="margin-left:5px;width:49px;letter-spacing:.02px">15:40<br>03-06-2024</div>
    <svg style="margin-left:6px" width="37" height="20"><path d="M1 12q1.500-1 1.500-4T6 4.500 9 8t1.500 4zM4 14h4" fill="#3b373b" stroke="#3b373b"/><path d="M6 5h5M8 9h3" stroke="#3b373b"/><rect x="23" y="1" width="9" height="10" rx="3" fill="#2c8fd3"/><path d="M27 1h8v8h-8z" fill="#7050c5"/><path d="M22 7h8l-3 7h-4z" fill="#ecb53d"/><path d="M30 6h8v8h-9z" fill="#d85493"/><path d="M27 10h11v6H27z" fill="#322e34"/><text x="28" y="15" font-size="5" fill="#ffd95d" font-weight="700">PRE</text></svg>
  </footer>
</div>
<script src="https://cdn.jsdelivr.net/npm/bootstrap@5.3.0/dist/js/bootstrap.bundle.min.js"></script>
</body>
</html>
